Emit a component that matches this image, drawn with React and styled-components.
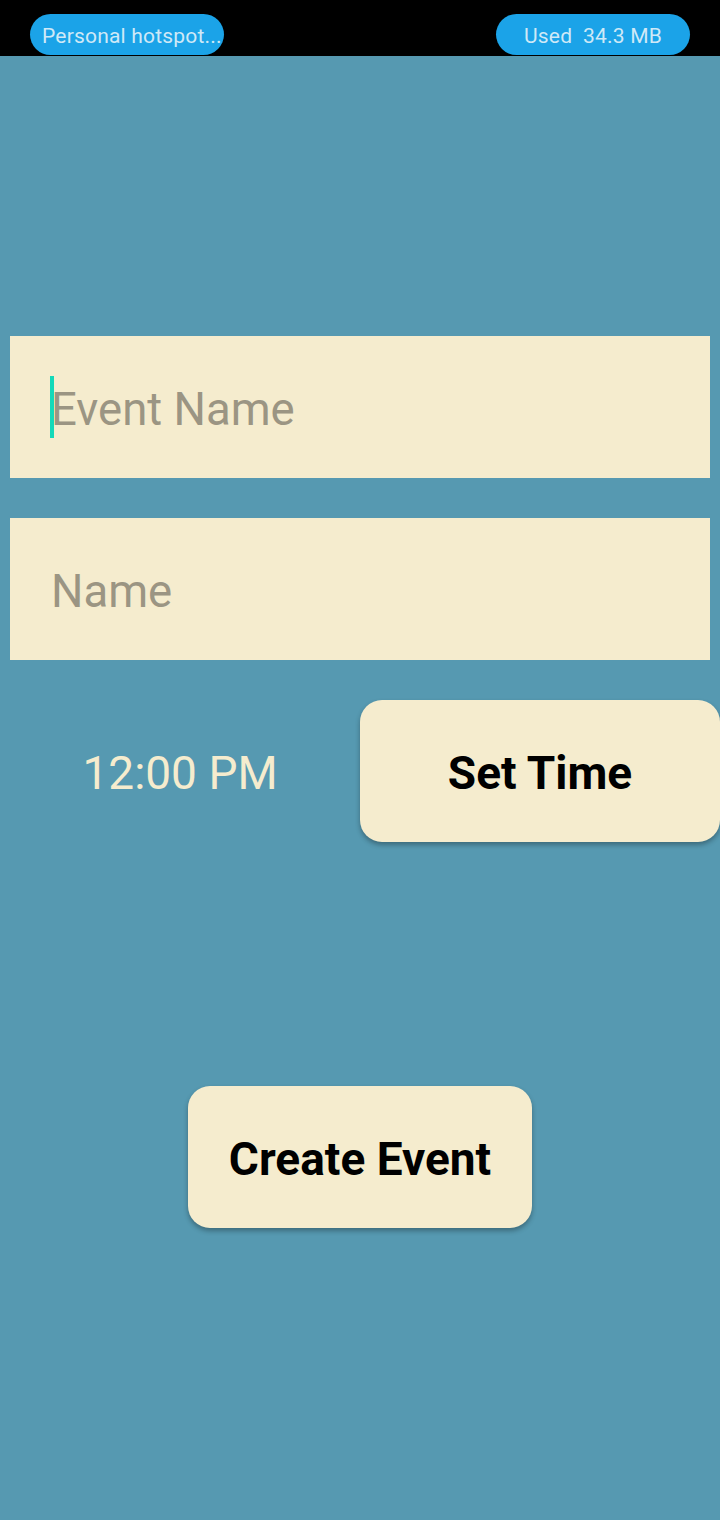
import React, { useState } from "react";
import styled, { createGlobalStyle } from "styled-components";

const GlobalStyle = createGlobalStyle`
  html, body {
    margin: 0;
    padding: 0;
    background: #5699b1;
  }
  * {
    box-sizing: border-box;
  }
`;

const App = () => {
  const [eventName, setEventName] = useState("");
  const [name, setName] = useState("");

  return (
    <StScreen>
      <GlobalStyle />
      <StStatusBar>
        <StPill $left>Personal hotspot...</StPill>
        <StPill>Used&nbsp; 34.3 MB</StPill>
      </StStatusBar>
      <StBody>
        <StField>
          <StCursor />
          <StInput
            value={eventName}
            onChange={(e) => setEventName(e.target.value)}
            placeholder="Event Name"
          />
        </StField>
        <StField>
          <StInput
            value={name}
            onChange={(e) => setName(e.target.value)}
            placeholder="Name"
          />
        </StField>
        <StTimeRow>
          <StTimeText>12:00 PM</StTimeText>
          <StButton $width="360px">Set Time</StButton>
        </StTimeRow>
        <StCreateWrap>
          <StButton $width="344px">Create Event</StButton>
        </StCreateWrap>
      </StBody>
    </StScreen>
  );
};

export default App;

const StScreen = styled.div`
  width: 720px;
  min-height: 1520px;
  background: #5699b1;
  font-family: Roboto, "Noto Sans", sans-serif;
`;

const StStatusBar = styled.div`
  height: 56px;
  background: #000;
  display: flex;
  justify-content: space-between;
  align-items: flex-end;
  padding: 0 30px 1px 30px;
`;

const StPill = styled.div`
  width: 194px;
  height: 41px;
  border-radius: 21px;
  background: #1ba3e8;
  color: #cfe9f7;
  font-size: 21px;
  letter-spacing: 0.2px;
  display: flex;
  align-items: center;
  justify-content: ${(p) => (p.$left ? "flex-start" : "center")};
  padding: 2px 0 0 ${(p) => (p.$left ? "12px" : "0")};
  white-space: nowrap;
  overflow: hidden;
`;

const StBody = styled.div`
  display: flex;
  flex-direction: column;
  padding-top: 280px;
`;

const StField = styled.div`
  position: relative;
  height: 142px;
  margin: 0 10px 40px 10px;
  background: #f5ecce;
  display: flex;
  align-items: center;
  padding: 4px 0 0 41px;
`;

const StCursor = styled.div`
  position: absolute;
  left: 40px;
  top: 40px;
  width: 4px;
  height: 62px;
  background: #14d9b9;
`;

const StInput = styled.input`
  width: 100%;
  border: 0;
  outline: none;
  background: transparent;
  font-family: Roboto, "Noto Sans", sans-serif;
  font-size: 45.5px;
  color: #333;
  padding: 0;
  &::placeholder {
    color: #9b9583;
  }
`;

const StTimeRow = styled.div`
  display: flex;
  align-items: center;
  height: 142px;
`;

const StTimeText = styled.div`
  width: 360px;
  padding-top: 4px;
  text-align: center;
  font-size: 46px;
  color: #f5ecce;
`;

const StButton = styled.button`
  width: ${(p) => p.$width};
  height: 142px;
  border: 0;
  border-radius: 22px;
  padding: 4px 0 0 0;
  background: #f5ecce;
  color: #000;
  font-family: Roboto, "Noto Sans", sans-serif;
  font-weight: 700;
  font-size: 46px;
  box-shadow: 0 3px 5px rgba(0, 0, 0, 0.3);
  cursor: pointer;
`;

const StCreateWrap = styled.div`
  display: flex;
  justify-content: center;
  margin-top: 244px;
`;
